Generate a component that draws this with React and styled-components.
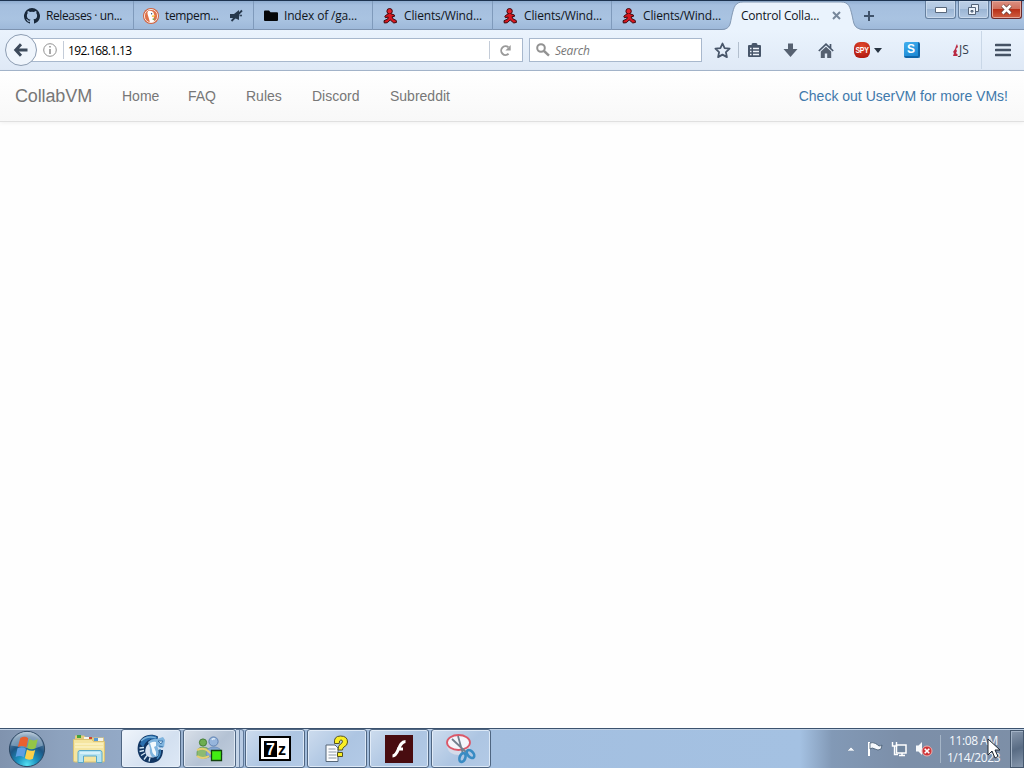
import React from 'react';
import styled, { createGlobalStyle, css } from 'styled-components';

const Global = createGlobalStyle`
  * { box-sizing: border-box; }
  html, body { margin: 0; padding: 0; overflow: hidden; background: #fefefe; }
  svg { display: block; flex: none; }
`;

const Screen = styled.div`
  width: 1024px;
  height: 768px;
  display: flex;
  flex-direction: column;
  overflow: hidden;
  background: #fefefe;
  font-family: 'Open Sans', 'Noto Sans', sans-serif;
  font-size: 12px;
  color: #10151c;
`;

const TabStrip = styled.header`
  height: 30px;
  flex: none;
  display: flex;
  align-items: stretch;
  border-top: 1px solid #1d3350;
  padding-left: 14px;
  background: linear-gradient(#8fadd0 0, #a5bfdf 4px, #a9c3e1 18px, #9db8d9 100%);
  box-shadow: inset 0 -1px #7d93b0;
`;

const Tab = styled.div`
  width: ${p => p.$w}px;
  flex: none;
  display: flex;
  align-items: center;
  padding-left: ${p => p.$pad || 10}px;
  border-right: ${p => (p.$last ? 'none' : '1px solid #7f9abb')};
  white-space: nowrap;
  height: 29px;
`;

const TabLabel = styled.span`
  width: ${p => p.$w}px;
  margin-left: ${p => p.$gap || 0}px;
  letter-spacing: ${p => p.$ls || 0}px;
  line-height: 16px;
  margin-top: 1px;
  white-space: nowrap;
  flex: none;
`;

const ActiveTab = styled.div`
  width: 142px;
  flex: none;
  position: relative;
  display: flex;
  align-items: center;
  padding-left: 19px;
`;

const TabShape = styled.svg`
  position: absolute;
  left: 0;
  top: 0;
`;

const TabContent = styled.div`
  position: relative;
  display: flex;
  align-items: center;
`;

const NewTab = styled.div`
  width: 57px;
  margin-left: -1px;
  display: flex;
  align-items: center;
`;

const WindowButtons = styled.div`
  display: flex;
  gap: 2px;
  margin-left: 5px;
`;

const WindowButton = styled.div`
  width: 31px;
  height: 18px;
  display: flex;
  align-items: center;
  justify-content: center;
  border: 1px solid ${p => (p.$close ? '#6b2b2c' : '#66809f')};
  border-top: 0;
  border-radius: 0 0 3px 3px;
  box-shadow: inset 0 0 0 1px ${p => (p.$close ? '#e5a79a' : '#c9d9ec')};
  background: ${p => (p.$close
    ? 'linear-gradient(#dc9183 0, #d0705d 46%, #b93018 50%, #cf6043 100%)'
    : 'linear-gradient(#bccfe6 0, #b1c7e1 46%, #9bb5d4 50%, #b2c8e2 100%)')};
`;

const Toolbar = styled.div`
  height: 41px;
  flex: none;
  display: flex;
  align-items: center;
  padding-left: 5px;
  border-bottom: 1px solid #a4b6cc;
  background: linear-gradient(#eaf3fd, #dfe9f6);
`;

const BackButton = styled.div`
  width: 32px;
  height: 32px;
  flex: none;
  border-radius: 50%;
  border: 1px solid #8d9db2;
  background: #eff5fc;
  display: flex;
  align-items: center;
  justify-content: center;
  z-index: 1;
`;

const Field = styled.div`
  height: 24px;
  flex: none;
  display: flex;
  align-items: center;
  border: 1px solid #a8b8cd;
  background: #fff;
  width: ${p => p.$w}px;
  margin-left: ${p => p.$ml}px;
  padding-left: ${p => p.$pl}px;
`;

const Rule = styled.i`
  width: 1px;
  height: ${p => p.$h}px;
  margin: 0 ${p => p.$mr || 0}px 0 ${p => p.$ml || 0}px;
  background: ${p => p.$c || '#c4ccd8'};
  flex: none;
`;

const Url = styled.span`
  width: 421px;
  color: #000;
  letter-spacing: -0.65px;
`;

const SearchHint = styled.span`
  margin-left: 5px;
  font-style: italic;
  color: #777;
  letter-spacing: -0.2px;
`;

const Tools = styled.div`
  display: flex;
  align-items: center;
  height: 40px;
  margin-left: 12px;
`;

const Slot = styled.div`
  margin-left: ${p => p.$ml || 0}px;
  flex: none;
`;

const SpyBadge = styled.div`
  width: 16px;
  height: 16px;
  margin-left: 20px;
  border-radius: 6px;
  background: radial-gradient(circle at 50% 25%, #e0482c, #a90f0a);
  color: #fff;
  display: flex;
  align-items: center;
  justify-content: center;
  font: bold 7px/16px 'Liberation Sans', sans-serif;
  letter-spacing: -0.3px;
`;

const SpyText = styled.span`
  transform: scaleY(1.3);
`;

const SBadge = styled.div`
  width: 16px;
  height: 16px;
  margin-left: 22px;
  border-radius: 2px;
  border: solid #0f66aa;
  border-width: 0 2px 2px 0;
  background: linear-gradient(160deg, #41aeee, #1b87d2);
  color: #fff;
  text-align: center;
  font: bold 12px/14px 'Liberation Sans', sans-serif;
`;

const JsMark = styled.div`
  display: flex;
  align-items: center;
  width: 17px;
  margin-left: 33px;
  color: #333c4a;
  font: 12px/16px 'Open Sans', sans-serif;
`;

const SiteNav = styled.nav`
  height: 51px;
  flex: none;
  display: flex;
  align-items: center;
  padding: 0 16px 0 15px;
  border-bottom: 1px solid #e0e0e0;
  background: linear-gradient(#fff, #f8f8f8);
  box-shadow: 0 1px 4px rgba(0, 0, 0, 0.06);
  font-family: 'Liberation Sans', Arial, sans-serif;
  font-size: 14px;
  color: #777;
`;

const Brand = styled.span`
  font-size: 18px;
  width: 77px;
  letter-spacing: -0.13px;
`;

const NavLinks = styled.div`
  display: flex;
  gap: 30px;
  margin-left: 30px;
  flex: 1;
`;

const NavLink = styled.span`
  width: ${p => p.$w}px;
  white-space: nowrap;
`;

const Promo = styled.span`
  color: #4079ab;
`;

const Page = styled.main`
  flex: 1;
`;

const Taskbar = styled.footer`
  height: 40px;
  flex: none;
  display: flex;
  align-items: stretch;
  border-top: 1px solid #3c526e;
  box-shadow: inset 0 1px #c0d1e5;
  background: linear-gradient(90deg, #8093ae 0, #8da2be 60px, #93a9c6 120px, #a0bad9 240px, #a3bfe0 480px, #a4c1e2 800px, #8299b6 832px, #7c8fa9 900px, #7d8fa7 100%);
`;

const Launcher = styled.div`
  width: ${p => p.$w}px;
  padding-left: ${p => p.$pl}px;
  display: flex;
  align-items: center;
  flex: none;
`;

const activeTask = css`
  background: linear-gradient(135deg, #f0f5fb, #d3e0f0 60%, #dde8f5);
`;

const quietTask = css`
  background: linear-gradient(135deg, #d9e0e9, #b4c2d4 55%, #c3cfde);
`;

const TaskButton = styled.div`
  width: ${p => p.$w || 60}px;
  height: 39px;
  margin-right: 2px;
  flex: none;
  display: flex;
  align-items: center;
  justify-content: center;
  border: 1px solid #4f6682;
  border-radius: 3px;
  box-shadow: inset 0 0 0 1px rgba(235, 243, 252, 0.75);
  background: linear-gradient(135deg, #cddcee, #adc5e2 55%, #b3cae6);
  ${p => p.$active && activeTask}
  ${p => p.$quiet && quietTask}
`;

const StackEdges = styled.div`
  width: 8px;
  height: 39px;
  margin: 0 1px 0 -2px;
  flex: none;
  border: solid #5f7898;
  border-width: 1px 1px 1px 0;
  border-radius: 0 3px 3px 0;
  background: linear-gradient(90deg, #c5d5e8 0 3px, #6c84a3 3px 4px, #b8cbe3 4px);
`;

const Tray = styled.div`
  margin-left: auto;
  display: flex;
  align-items: center;
`;

const Clock = styled.div`
  width: 69px;
  padding: 1px 4px 0 0;
  display: flex;
  flex-direction: column;
  align-items: center;
  color: #f4f8fd;
  line-height: 17px;
  letter-spacing: -0.4px;
  white-space: nowrap;
`;

const ShowDesktop = styled.div`
  width: 14px;
  height: 38px;
  border: 1px solid #45576d;
  box-shadow: inset 1px 1px #a2b2c5;
  background: linear-gradient(160deg, #8898ad, #596c84 50%, #8596ac);
`;

const Pointer = styled.svg`
  position: absolute;
  left: 987px;
  top: 738px;
`;

const GithubIcon = () => (
  <svg width="16" height="16" viewBox="0 0 16 16" fill="#19283a">
    <path d="M8 0a8 8 0 0 0-2.5 15.6c.4.1.5-.2.5-.4v-1.5c-2.2.5-2.7-1-2.7-1-.4-.9-.9-1.2-.9-1.2-.7-.5.1-.5.1-.5.8.1 1.2.8 1.2.8.7 1.3 1.9.9 2.3.7.1-.5.3-.9.5-1.1-1.8-.2-3.6-.9-3.6-4 0-.9.3-1.6.8-2.2-.1-.2-.4-1 .1-2.1 0 0 .7-.2 2.2.8a7.6 7.6 0 0 1 4 0c1.5-1 2.2-.8 2.2-.8.4 1.1.2 1.9.1 2.1.5.6.8 1.3.8 2.2 0 3.1-1.9 3.7-3.7 4 .3.3.6.8.6 1.5v2.3c0 .2.1.5.5.4A8 8 0 0 0 8 0z" />
  </svg>
);

const DuckIcon = () => (
  <svg width="16" height="16" viewBox="0 0 16 16">
    <circle cx="8" cy="8" r="8" fill="#d4633f" />
    <circle cx="8" cy="8" r="6.6" fill="#df714a" stroke="#f7e4da" strokeWidth="1" />
    <path d="M5 3.2c2.5-1.2 6 .2 6 3.2l.6 1-.9 1.1.6 4.7c-1.3 1-3.6 1-4.4.7L5.3 8.5C4.6 6.5 4 4 5 3.2z" fill="#fff" />
    <path d="M9 7.4l3.5-.2-.8 1.3-2.8.5z" fill="#f6bd32" />
    <circle cx="8.6" cy="5.7" r=".7" fill="#31506c" />
    <path d="M9 11l2.4-1v2.6z" fill="#67a44f" />
  </svg>
);

const MutedIcon = () => (
  <svg width="14" height="14" viewBox="0 0 14 14">
    <path d="M0 5h4l5-4v10L4.500 9H0z" fill="#27394e" />
    <path d="M9.500 6.500h2.500" fill="none" stroke="#35475d" strokeWidth="1.600" />
    <path d="M1.500 12L12 1.500" stroke="#27394e" strokeWidth="1.800" />
  </svg>
);

const FolderIcon = () => (
  <svg width="14" height="12" viewBox="0 0 14 12">
    <path d="M0 1.5Q0 .5 1 .5h4l1.5 1.7H13q1 0 1 1V10q0 1-1 1H1q-1 0-1-1z" fill="#050608" />
  </svg>
);

const RunnerIcon = () => (
  <svg width="15" height="16" viewBox="0 0 15 16">
    <path d="M5 5.800L1.800 8.200l.6 1.500 2.800-.7-.4 2L1 12.700l.3 2.300 3-.3L7.200 12l3.600 3 2.700-.6-.3-2-3.200-1.500-1-2.100 2.400-.4V7L8.500 6z" fill="#d8171f" stroke="#3d090e" strokeLinejoin="round" />
    <circle cx="6.600" cy="3.200" r="2.700" fill="#e0222a" stroke="#3d090e" />
    <path d="M5.500 5.800h2.500v2H5.500z" fill="#d8171f" />
  </svg>
);

const BackArrow = () => (
  <svg width="16" height="16" viewBox="0 0 16 16">
    <path d="M8 2.2L2.7 8 8 13.8M3 8h11.5" fill="none" stroke="#3d4a5b" strokeWidth="2.9" />
  </svg>
);

const InfoIcon = () => (
  <svg width="14" height="14" viewBox="0 0 14 14">
    <circle cx="7" cy="7" r="6.3" fill="none" stroke="#929292" />
    <path d="M7 3v1.6M7 6v5" stroke="#8c8c8c" strokeWidth="1.5" />
  </svg>
);

const ReloadIcon = () => (
  <svg width="13" height="13" viewBox="0 0 13 13">
    <path d="M9.6 9.8a4.4 4.4 0 1 1-.2-6.6" fill="none" stroke="#9a9a9a" strokeWidth="1.9" />
    <path d="M11.7 1v5.6H6.4z" fill="#9a9a9a" />
  </svg>
);

const MagnifierIcon = () => (
  <svg width="14" height="14" viewBox="0 0 14 14" fill="none" stroke="#929292" strokeWidth="2">
    <circle cx="5" cy="5" r="3.8" />
    <path d="M8 8l5 4.6" strokeWidth="2.4" />
  </svg>
);

const StarIcon = () => (
  <svg width="17" height="17" viewBox="0 0 17 17">
    <path d="M8.5 1.5l2.1 4.6 5 .6-3.7 3.4 1 5-4.4-2.5-4.4 2.5 1-5-3.7-3.4 5-.6z" fill="none" stroke="#48566a" strokeWidth="1.8" strokeLinejoin="round" />
  </svg>
);

const ListIcon = () => (
  <svg width="15" height="16" viewBox="0 0 15 16">
    <path d="M2 3h11q1 0 1 1v10q0 1-1 1H2q-1 0-1-1V4q0-1 1-1zM4.5 3q0-2 1.5-2h3q1.5 0 1.5 2z" fill="#48566a" />
    <path d="M3 6.5h1.5M6 6.5h6M3 9.5h1.5M6 9.5h6M3 12.5h1.5M6 12.5h6" stroke="#eef4fb" strokeWidth="1.4" />
  </svg>
);

const DownloadIcon = () => (
  <svg width="15" height="15" viewBox="0 0 15 15">
    <path d="M5 .5h5V6h4.5l-7 8L.5 6H5z" fill="#566171" />
  </svg>
);

const HomeIcon = () => (
  <svg width="16" height="15" viewBox="0 0 16 15">
    <path d="M.8 8L8 1.2 15.2 8M12.5 1v4" fill="none" stroke="#48566a" strokeWidth="1.7" />
    <path d="M2.8 8.4L8 3.8l5.2 4.6V15h-4v-4.4H6.8V15h-4z" fill="#566171" />
  </svg>
);

const MenuIcon = () => (
  <svg width="16" height="14" viewBox="0 0 16 14">
    <path d="M1 2h14M1 7h14M1 12h14" stroke="#465365" strokeWidth="2.6" strokeLinecap="round" />
  </svg>
);

const StartOrb = () => (
  <svg width="38" height="38" viewBox="0 0 38 38">
    <defs>
      <radialGradient id="orb" cx=".5" cy=".95" r=".95">
        <stop offset="0" stopColor="#55e0f2" />
        <stop offset=".3" stopColor="#1c93c0" />
        <stop offset=".6" stopColor="#1d5684" />
        <stop offset=".85" stopColor="#5c7d9e" />
        <stop offset="1" stopColor="#b9c9d8" />
      </radialGradient>
    </defs>
    <circle cx="19" cy="19" r="17.6" fill="url(#orb)" stroke="#2c4763" />
    <path d="M3 15.5a16.2 16.2 0 0 1 32 0q-8 4-16 2.5t-16-2.5z" fill="#d8e7f2" opacity=".38" />
    <path d="M12.300 8q4.500-2.600 8 .2l-2 9.200q-4.200-2.700-8.500-.3z" fill="#e8602f" />
    <path d="M21.300 9q4.200 2.600 8.400.3l-2.200 9q-4.200 2.200-8.300-.3z" fill="#94c545" />
    <path d="M9.500 18.300q4.300-2.300 8.500.4l-2.200 8.600q-4-2.600-8.200-.2z" fill="#5d9ee2" />
    <path d="M18.900 19.500q4.200 2.500 8.300.4l-2.300 8.800q-4 2.200-8-.4z" fill="#fbd04a" />
  </svg>
);

const ExplorerIcon = () => (
  <svg width="34" height="30" viewBox="0 0 34 30">
    <path d="M3 1.5h9l2 2h18v24H3z" fill="#e3cb7c" />
    <path d="M5 1h4v3H5z" fill="#43a33a" />
    <path d="M12 3h5v2h-5z" fill="#f8f6e8" />
    <path d="M17 3h3v2h-3z" fill="#ce4732" />
    <path d="M22 4h4v3h-4z" fill="#5599d5" />
    <path d="M26 4h5v3h-5z" fill="#f4f4ea" />
    <path d="M1.5 5.5h18l2 2h11v19q0 1.5-1.5 1.5H3q-1.5 0-1.5-1.5z" fill="#f5e5a0" stroke="#dcc373" />
    <path d="M3 10h28M3 13h28" stroke="#fbf2c4" strokeWidth="1.5" />
    <path d="M6 28.5V18.5q0-2 2-2h20q2 0 2 2v10h-5.5V22H11.5v6.5z" fill="#b5e3f2" stroke="#5aa9c9" />
    <path d="M8 19h20" stroke="#e2f6fc" strokeWidth="1.5" />
  </svg>
);

const DragonGlobeIcon = () => (
  <svg width="30" height="31" viewBox="0 0 30 31">
    <path d="M22 3.500C14-1 4 3 2 12 0 22 6 29.500 14 30c8 .5 13-5 13-13h-5c0 5-3 8-7 7.500-5-.5-7-5-5-10 1.500-4 6-6 11-5z" fill="#123663" />
    <path d="M4 11Q8 0 20 3l2 3Q11 4 7 14z" fill="#2b6fae" />
    <path d="M5 8q6-6 15-3" fill="none" stroke="#79b2db" strokeWidth="1.300" />
    <path d="M3.500 15l4.500-.5M3.500 18.500l4.500-1M5 22.500l4-2.500M8 26.500l3-4M13 28.500l1-4" fill="none" stroke="#d3e8f5" strokeWidth="1.300" />
    <path d="M12 9q4-4 9-3l6-2 2 3-1 7-4 1-3-2q3 5 1 10-3 2-6 1-3-4-2-9z" fill="#7fb4de" />
    <path d="M14 10q4-2 6-1l0 4-2 1 2 5 0 4q-4-2-4-6z" fill="#f2f9fd" />
    <path d="M22 8l5 0-2 3zM23 13l4 1" fill="#d7ebf8" stroke="#2a639c" strokeWidth=".8" />
    <path d="M24 16q1 6-3 10" fill="none" stroke="#3f89bf" strokeWidth="1.500" />
  </svg>
);

const MessengerIcon = () => (
  <svg width="28" height="26" viewBox="0 0 28 26">
    <circle cx="7" cy="6.5" r="3.6" fill="#6dae50" stroke="#447e35" />
    <path d="M1 20q-1-9 6-9t9 8q-7 6-15 1z" fill="#8cba72" stroke="#609a51" strokeWidth=".7" />
    <circle cx="17.5" cy="5.5" r="4.6" fill="#96b5dc" stroke="#5f82b2" />
    <path d="M16 4q1-2 3-1" stroke="#dbe9f7" strokeWidth="1.5" fill="none" />
    <path d="M10 19q0-8 8-8t8 8q-8 5-16 0z" fill="#84a7d4" stroke="#6589b7" strokeWidth=".7" />
    <path d="M1 14q7-3 11 1t5 3M1 20q6 4 12 0" fill="none" stroke="#e6ce72" strokeWidth="2" />
    <path d="M15.5 14.5h10v10h-10z" fill="#43ee13" stroke="#14440f" strokeWidth="1.3" />
  </svg>
);

const SevenZip = styled.div`
  width: 32px;
  height: 25px;
  border: 2px solid #000;
  background: #fff;
  display: flex;
  align-items: center;
  justify-content: center;
  gap: 1px;
  font: bold 16px/15px 'Liberation Sans', sans-serif;
  color: #000;
`;

const SevenBox = styled.span`
  width: 13px;
  height: 16px;
  background: #000;
  color: #fff;
  text-align: center;
  line-height: 17px;
`;

const SmallZ = styled.span`
  padding-top: 2px;
`;

const HelpDocIcon = () => (
  <svg width="24" height="28" viewBox="0 0 24 28">
    <path d="M1 10h9l3 3v13.5H1z" fill="#fbfcfd" stroke="#566778" />
    <path d="M3.5 14h7M3.5 17h8M3.5 20h8M3.5 23h8" stroke="#8c98a6" />
    <path d="M9.5 8.5q-1-7.5 6-7.5 7 0 7 6 0 3.5-3.5 5-1.5 1-1.5 3H13q0-4.5 2.5-6 2.2-1 2-2.7-.2-1.5-1.7-1.3-1.6.2-1.6 3.5zM12.5 17.5h5v4h-5z" fill="#f9ee24" stroke="#555321" />
  </svg>
);

const FlashIcon = () => (
  <svg width="28" height="28" viewBox="0 0 28 28">
    <path d="M0 0h28v28H0z" fill="#480c10" />
    <path d="M20.5 6.5C13 6.5 14 21 7.5 21M12 14h6" fill="none" stroke="#fff" strokeWidth="3" />
  </svg>
);

const SnippingIcon = () => (
  <svg width="32" height="32" viewBox="0 0 32 32">
    <path d="M2 10v4q2 8 12 8 9-1 11-7v-5z" fill="#d5dbe9" />
    <ellipse cx="13.5" cy="9.5" rx="11.5" ry="7.5" fill="#f4f5fb" stroke="#db5869" strokeWidth="1.8" />
    <path d="M7 6l15 14M13 3l5 18" stroke="#737f8d" strokeWidth="1.8" />
    <g fill="none" stroke="#398bc3" strokeWidth="2.7">
      <ellipse cx="17.5" cy="24.5" rx="2.8" ry="4.6" transform="rotate(20 17.5 24.5)" />
      <ellipse cx="25.5" cy="21" rx="2.8" ry="4.6" transform="rotate(-42 25.5 21)" />
    </g>
  </svg>
);

const tabs = [
  { w: 120, label: 'Releases · un...', icon: <GithubIcon />, gap: 6, ls: -0.4 },
  { w: 120, label: 'tempem...', icon: <DuckIcon />, pad: 9, gap: 6, ls: -0.35, muted: true },
  { w: 119, label: 'Index of /ga...', icon: <FolderIcon />, gap: 6, ls: -0.17 },
  { w: 120, label: 'Clients/Wind...', icon: <RunnerIcon />, gap: 6, ls: -0.16 },
  { w: 119, label: 'Clients/Wind...', icon: <RunnerIcon />, gap: 6, ls: -0.16 },
  { w: 110, label: 'Clients/Wind...', icon: <RunnerIcon />, gap: 6, ls: -0.16, last: true },
];

const links = [['Home', 36], ['FAQ', 28], ['Rules', 36], ['Discord', 48], ['Subreddit', 62]];

export default function App() {
  return (
    <>
      <Global />
      <Screen>
        <TabStrip>
          {tabs.map((t, i) => (
            <Tab key={i} $w={t.w} $pad={t.pad} $last={t.last}>
              {t.icon}
              <TabLabel $gap={t.gap} $ls={t.ls} $w={t.muted ? 65 : undefined}>{t.label}</TabLabel>
              {t.muted && <MutedIcon />}
            </Tab>
          ))}
          <ActiveTab>
            <TabShape width="142" height="29" viewBox="0 0 142 29">
              <path d="M0 29C9 28 8 22 10 14S13 1 21 1h98c8 0 9 5 11 13s1 14 12 15z" fill="#eaf3fd" />
              <path d="M0 28.5C9 28 8 22 10 14S13 1 21 1h98c8 0 9 5 11 13s1 14 12 14.5" fill="none" stroke="#8298b3" />
            </TabShape>
            <TabContent>
              <TabLabel $ls={-0.22} $w={91}>Control Colla...</TabLabel>
              <svg width="9" height="9" viewBox="0 0 9 9"><path d="M1 1l7 7M8 1L1 8" stroke="#77879b" strokeWidth="2" /></svg>
            </TabContent>
          </ActiveTab>
          <NewTab>
            <svg width="12" height="12" viewBox="0 0 12 12"><path d="M6 1v10M1 6h10" stroke="#40536b" strokeWidth="2" /></svg>
          </NewTab>
          <WindowButtons>
            <WindowButton><svg width="12" height="6" viewBox="0 0 12 6"><path d="M.5 .5h11v5H.5z" fill="#fff" stroke="#58677b" /></svg></WindowButton>
            <WindowButton><svg width="13" height="12" viewBox="0 0 13 12"><path d="M4.5 .5h7v7h-7z" fill="#eef4fb" stroke="#55657a" /><path d="M1.5 3.5h7v7h-7z" fill="#eef4fb" stroke="#55657a" /><path d="M4 6.5h2v1.5H4z" fill="#8ba4c2" stroke="#55657a" /></svg></WindowButton>
            <WindowButton $close><svg width="13" height="11" viewBox="0 0 13 11"><path d="M2.5 1.5l8 8M10.5 1.5l-8 8" stroke="#66403c" strokeWidth="4" /><path d="M2.5 1.5l8 8M10.5 1.5l-8 8" stroke="#fff" strokeWidth="2.6" /></svg></WindowButton>
          </WindowButtons>
        </TabStrip>

        <Toolbar>
          <BackButton><BackArrow /></BackButton>
          <Field $w={492} $ml={-6} $pl={11}>
            <InfoIcon />
            <Rule $h={18} $ml={6} $mr={4} />
            <Url>192.168.1.13</Url>
            <Rule $h={18} $mr={9} />
            <ReloadIcon />
          </Field>
          <Field $w={173} $ml={6} $pl={6}>
            <MagnifierIcon />
            <SearchHint>Search</SearchHint>
          </Field>
          <Tools>
            <StarIcon />
            <Rule $h={16} $ml={7} $mr={8} $c="#b3bfce" />
            <ListIcon />
            <Slot $ml={21}><DownloadIcon /></Slot>
            <Slot $ml={20}><HomeIcon /></Slot>
            <SpyBadge><SpyText>SPY</SpyText></SpyBadge>
            <Slot $ml={4}><svg width="8" height="5" viewBox="0 0 8 5"><path d="M0 0h8L4 5z" fill="#283442" /></svg></Slot>
            <SBadge>S</SBadge>
            <JsMark>
              <svg width="6" height="12" viewBox="0 0 6 12"><path d="M4 0l1 3-2 2 1 2-1 2 2 2-1 1H0l1-3-1-1 2-3 1-3z" fill="#ba2942" /></svg>
              JS
            </JsMark>
            <Rule $h={38} $ml={11} $mr={13} $c="#c9d7e7" />
            <MenuIcon />
          </Tools>
        </Toolbar>

        <SiteNav>
          <Brand>CollabVM</Brand>
          <NavLinks>
            {links.map(([name, w]) => <NavLink key={name} $w={w}>{name}</NavLink>)}
          </NavLinks>
          <Promo>Check out UserVM for more VMs!</Promo>
        </SiteNav>
        <Page />

        <Taskbar>
          <Launcher $w={72} $pl={8}><StartOrb /></Launcher>
          <Launcher $w={49} $pl={0}><ExplorerIcon /></Launcher>
          <TaskButton $active><DragonGlobeIcon /></TaskButton>
          <TaskButton $w={53} $quiet><MessengerIcon /></TaskButton>
          <StackEdges />
          <TaskButton><SevenZip><SevenBox>7</SevenBox><SmallZ>z</SmallZ></SevenZip></TaskButton>
          <TaskButton><HelpDocIcon /></TaskButton>
          <TaskButton><FlashIcon /></TaskButton>
          <TaskButton><SnippingIcon /></TaskButton>
          <Tray>
            <svg width="8" height="5" viewBox="0 0 8 5"><path d="M0 5l4-4 4 4z" fill="#f2f6fb" stroke="#637892" strokeWidth=".5" /></svg>
            <Slot $ml={12}><svg width="16" height="16" viewBox="0 0 16 16"><path d="M2 1v14" stroke="#fff" strokeWidth="2" /><path d="M3 2q3-1 5.5.5T12 5q1.5 0 3-1l-1 4q-3 2-6 0T3 8z" fill="#f5f8fc" stroke="#435970" strokeWidth=".8" /></svg></Slot>
            <Slot $ml={8}><svg width="17" height="16" viewBox="0 0 17 16"><path d="M5.5 4H15v8H5.5zM8 14.5h6M11 12v2" fill="#71869f" stroke="#fff" strokeWidth="1.5" /><path d="M1.5 1v4h4V1M3.5 5v8.5H7" fill="none" stroke="#fff" strokeWidth="1.4" /></svg></Slot>
            <Slot $ml={8}><svg width="17" height="17" viewBox="0 0 17 17"><path d="M0 5.5h2.5L6 2v13l-3.5-3.5H0z" fill="#f6f9fc" /><circle cx="11" cy="11" r="5" fill="#cf3538" stroke="#ebb1af" /><path d="M8.7 8.7l4.6 4.6M13.3 8.7l-4.6 4.6" stroke="#fff" strokeWidth="1.6" /></svg></Slot>
            <Rule $h={28} $ml={7} $c="#a5b5c7" />
            <Clock><span>11:08 AM</span><span>1/14/2023</span></Clock>
            <ShowDesktop />
          </Tray>
        </Taskbar>
      </Screen>
      <Pointer width="14" height="22" viewBox="0 0 14 22">
        <path d="M1 1v16l4-4 3 7 3-1.5-3-6.5h5z" fill="#fff" stroke="#1d2630" />
      </Pointer>
    </>
  );
}
